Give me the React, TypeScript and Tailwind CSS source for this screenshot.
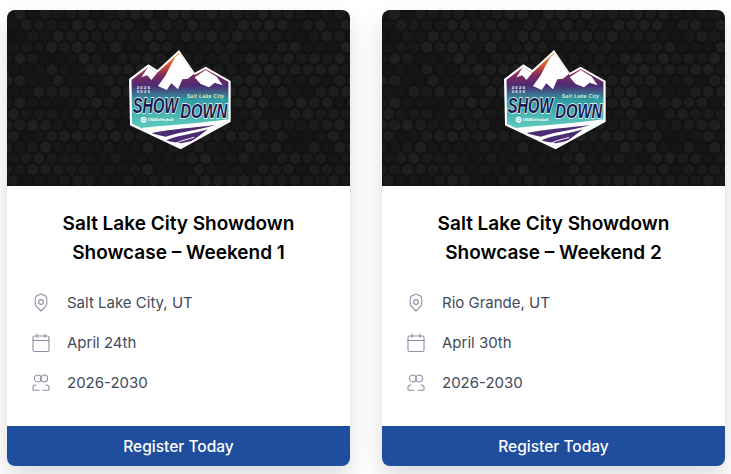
import React from "react";

const events = [
  { title: "Salt Lake City Showdown", sub: "Showcase – Weekend 1", place: "Salt Lake City, UT", date: "April 24th" },
  { title: "Salt Lake City Showdown", sub: "Showcase – Weekend 2", place: "Rio Grande, UT", date: "April 30th" },
];

// brightness of the background hexes, just a repeating bumpy noise
function hexShade(col: number, row: number) {
  const n = Math.sin(col * 12.9898 + row * 78.233) * 43758.5453;
  const r = n - Math.floor(n);
  return 0.012 + r * 0.05;
}

function HexBackground() {
  const hexes = [];
  for (let row = 0; row < 17; row++) {
    for (let col = 0; col < 29; col++) {
      const x = col * 12.8 + (row % 2 ? 6.4 : 0);
      const y = row * 11.1 + 4;
      hexes.push(
        <polygon
          key={row + "-" + col}
          transform={`translate(${x} ${y})`}
          points="0,-6 5.2,-3 5.2,3 0,6 -5.2,3 -5.2,-3"
          fill="#ffffff"
          opacity={hexShade(col, row)}
        />
      );
    }
  }
  return (
    <svg className="absolute inset-0" width="343" height="176" viewBox="0 0 343 176">
      {hexes}
    </svg>
  );
}

function Logo({ id }: { id: string }) {
  const outline = "M85,129 L143,85 L170,102 L235,42 L282,110 L315,92 L390,135 L390,257 L240,340 L88,268 Z";
  return (
    <svg className="relative" width="160" height="125" viewBox="-5 0 480 375">
      <defs>
        <linearGradient id={id + "g"} x1="0" y1="50" x2="0" y2="280" gradientUnits="userSpaceOnUse">
          <stop offset="0" stopColor="#f39a32" />
          <stop offset="0.17" stopColor="#d4512e" />
          <stop offset="0.3" stopColor="#7a2a60" />
          <stop offset="0.43" stopColor="#4c2c73" />
          <stop offset="0.62" stopColor="#2f9ea3" />
          <stop offset="1" stopColor="#62cdbf" />
        </linearGradient>
        <clipPath id={id + "c"}>
          <path d="M92,132 L143,93 L170,110 L235,50 L282,117 L315,99 L384,138 L384,253 L240,333 L94,263 Z" />
        </clipPath>
      </defs>
      <path d={outline} fill="#ffffff" />
      <g clipPath={`url(#${id}c)`}>
        <rect x="80" y="40" width="320" height="240" fill={`url(#${id}g)`} />
        {/* snow */}
        <path d="M238,52 L282,112 L262,128 L245,130 L232,160 L212,142 L198,162 L172,150 L195,118 L212,85 L225,62 Z" fill="#ffffff" />
        <path d="M282,124 L315,102 L348,122 L366,148 L342,140 L325,154 L300,144 Z" fill="#ffffff" />
        <path d="M143,92 L170,110 L152,132 L140,118 L122,124 Z" fill="#ffffff" />
        {/* bottom of the badge */}
        <path d="M80,262 L120,276 C200,268 300,262 400,248 L400,345 L80,345 Z" fill="#ffffff" />
        <path d="M150,292 C210,278 280,276 345,266 C300,282 250,284 195,302 Z" fill="#4c2c73" />
        <path d="M195,314 C230,298 270,296 322,280 L275,315 L240,322 Z" fill="#4c2c73" />
        <path d="M225,322 C245,312 262,310 280,304" fill="none" stroke="#ffffff" strokeWidth="3" />
      </g>
      <g fontFamily="'Liberation Sans', sans-serif" fontWeight="700">
        <text x="108" y="160" fontSize="12" fill="#ffffff" textLength="40">2026</text>
        <text x="108" y="172" fontSize="12" fill="#ffffff" textLength="40">2026</text>
        <text x="258" y="185" fontSize="15" fontStyle="italic" fill="#d8f0c8" textLength="112">Salt Lake City</text>
        <text x="96" y="230" fontSize="66" fontStyle="italic" fill="#1c1c54" stroke="#ffffff" strokeWidth="4" paintOrder="stroke" textLength="136" lengthAdjust="spacingAndGlyphs">SHOW</text>
        <text x="239" y="247" fontSize="60" fontStyle="italic" fill="#1c1c54" stroke="#ffffff" strokeWidth="4" paintOrder="stroke" textLength="141" lengthAdjust="spacingAndGlyphs">DOWN</text>
        <text x="142" y="256" fontSize="12" fill="#ffffff" textLength="76" lengthAdjust="spacingAndGlyphs">USAVolleyball</text>
      </g>
      <circle cx="129" cy="251" r="9" fill="#ffffff" />
      <path d="M122,251 C127,246 132,247 136,250 M124,256 C128,252 132,252 135,254" fill="none" stroke="#45b3ac" strokeWidth="2" />
    </svg>
  );
}

function PinIcon() {
  return (
    <svg width="18" height="20" viewBox="0 0 18 20" fill="none" stroke="#8a90a3" strokeWidth="1.1" strokeLinejoin="round">
      <path d="M9,1 L14,3.2 C15.2,7 15,11 13.8,13.2 L9,18 L4.2,13.2 C3,11 2.8,7 4,3.2 Z" />
      <circle cx="9" cy="9" r="2.4" />
    </svg>
  );
}

function CalendarIcon() {
  return (
    <svg width="18" height="20" viewBox="0 0 18 20" fill="none" stroke="#8a90a3" strokeWidth="1.1" strokeLinecap="round">
      <rect x="1" y="3" width="16" height="15.5" rx="1.5" />
      <path d="M1,7.5 H17 M5,1 V4.5 M13,1 V4.5" />
    </svg>
  );
}

function PeopleIcon() {
  return (
    <svg width="18" height="20" viewBox="0 0 18 20" fill="none" stroke="#8a90a3" strokeWidth="1.1" strokeLinecap="round">
      <circle cx="5.8" cy="5.4" r="3.4" />
      <circle cx="12.2" cy="5.4" r="3.4" />
      <path d="M1,17 V14.5 C1,13 2,12 4,12 M7,17.3 H1.5 M17,17 V14.5 C17,13 16,12 14,12 M11,17.3 H16.5" />
    </svg>
  );
}

function App() {
  return (
    <div className="min-h-screen bg-white flex gap-[32px] pl-[7px] pt-[10px] font-['Inter',sans-serif] overflow-hidden">
      {events.map((ev, i) => (
        <div key={i} className="w-[343px] h-[456px] shrink-0 bg-white rounded-lg overflow-hidden shadow-[0_12px_24px_rgba(0,0,0,0.14)] flex flex-col">

          {/* Banner */}
          <div className="relative h-[176px] bg-[#121212] flex justify-center items-center">
            <HexBackground />
            <Logo id={"logo" + i} />
          </div>

          {/* Title */}
          <div className="pt-[23px] text-center text-[19px] leading-[29px] font-semibold text-black">
            <div>{ev.title}</div>
            <div>{ev.sub}</div>
          </div>

          {/* Details */}
          <div className="pt-[16px] pl-[25px] flex-1 flex flex-col text-[#414a5b] text-[15px]">
            <div className="flex items-center gap-[17px] h-[40px]">
              <PinIcon />
              <span>{ev.place}</span>
            </div>
            <div className="flex items-center gap-[17px] h-[40px]">
              <CalendarIcon />
              <span>{ev.date}</span>
            </div>
            <div className="flex items-center gap-[17px] h-[40px]">
              <PeopleIcon />
              <span>2026-2030</span>
            </div>
          </div>

          {/* Button */}
          <button className="h-[40px] pt-px bg-[#1f4e9e] text-white font-medium text-[15.5px]">
            Register Today
          </button>
        </div>
      ))}
    </div>
  );
}

export default App;
